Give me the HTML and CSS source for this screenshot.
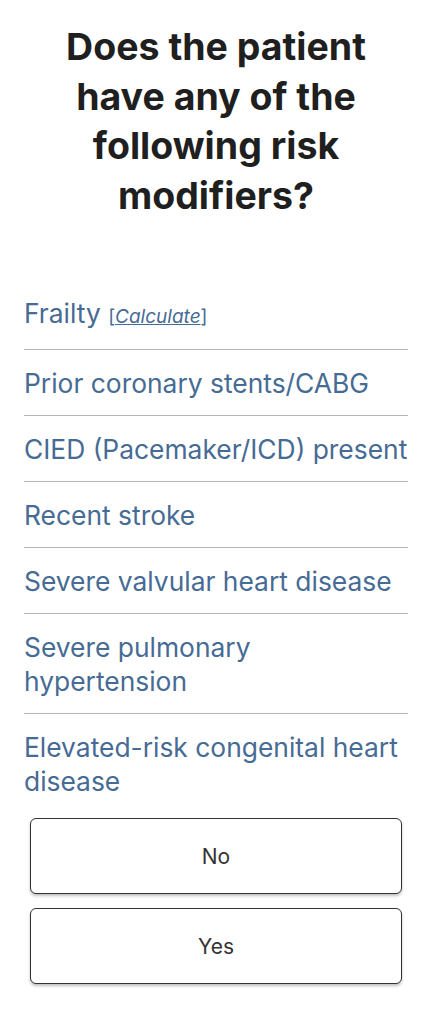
FILE: index.html
```html
<!DOCTYPE html>
<html lang="en">
<head>
  <meta charset="UTF-8" />
  <meta name="viewport" content="width=device-width, initial-scale=1.0"/>
  <title>Risk modifiers</title>
  <link rel="stylesheet" href="styles.css">
</head>
<body>
  <div class="page">
    <h1 class="question">Does the patient have any of the following risk modifiers?</h1>

    <ul class="modifiers">
      <li>Frailty <span class="calc">[<a href="#">Calculate</a>]</span></li>
      <li>Prior coronary stents/CABG</li>
      <li>CIED (Pacemaker/ICD) present</li>
      <li>Recent stroke</li>
      <li>Severe valvular heart disease</li>
      <li>Severe pulmonary hypertension</li>
      <li>Elevated-risk congenital heart disease</li>
    </ul>

    <div class="answers">
      <button class="answer-btn">No</button>
      <button class="answer-btn">Yes</button>
    </div>
  </div>
</body>
</html>
```

FILE: styles.css
```css
* {
  box-sizing: border-box;
  margin: 0;
  padding: 0;
  font-family: Inter, 'Noto Sans', sans-serif;
}

body {
  background: #fff;
  color: #222;
}

.page {
  padding: 22px 24px 20px;
}

/* === QUESTION === */
.question {
  max-width: 360px;
  margin: 0 auto;
  text-align: center;
  font-size: 37.5px;
  font-weight: 700;
  line-height: 49.5px;
  color: #1f1f1f;
}

/* === LIST === */
.modifiers {
  list-style: none;
  margin-top: 60px;
}

.modifiers li {
  padding: 16px 0 15px;
  font-size: 26.4px;
  line-height: 34px;
  color: #466b94;
  border-bottom: 1px solid #b4b4b4;
}

.modifiers li:last-child {
  border-bottom: none;
}

.calc {
  font-size: 19px;
}

.calc a {
  color: #466b94;
  font-style: italic;
}

/* === BUTTONS === */
.answers {
  display: flex;
  flex-direction: column;
  gap: 14px;
  padding: 5px 6px 0;
}

.answer-btn {
  height: 76px;
  background: #fff;
  border: 1.5px solid #333;
  border-radius: 6px;
  box-shadow: 0 2px 3px rgba(0,0,0,0.25);
  font-size: 21px;
  color: #333;
  cursor: pointer;
}
```
